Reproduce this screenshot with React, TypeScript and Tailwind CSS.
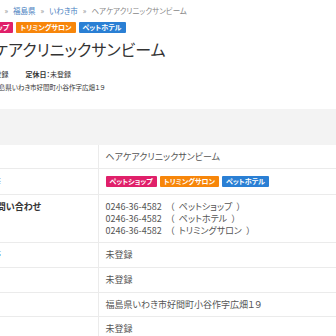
const jp = "font-['Noto_Sans_CJK_JP','Noto_Sans',sans-serif] [font-feature-settings:'palt']";

function Tag({ label, color }: { label: string; color: string }) {
  return (
    <span className={`inline-flex h-[11px] items-center px-[4px] text-[7px] font-bold leading-none text-white rounded-[1px] ${color}`}>
      {label}
    </span>
  );
}

function Tags() {
  return (
    <div className="flex gap-[3px]">
      <Tag label="ペットショップ" color="bg-[#e0206a]" />
      <Tag label="トリミングサロン" color="bg-[#f7860a]" />
      <Tag label="ペットホテル" color="bg-[#2a7fd4]" />
    </div>
  );
}

function Phone({ shop }: { shop: string }) {
  return (
    <div>
      0246-36-4582 <span className="ml-[2px] [font-feature-settings:normal]">（</span>
      <span className="ml-[4px]">{shop}</span>
      <span className="ml-[4px] [font-feature-settings:normal]">）</span>
    </div>
  );
}

type Row = { label: string; link?: boolean; bold?: boolean; body: React.ReactNode; pad: string };

const rows: Row[] = [
  { label: "店舗名", body: "ヘアケアクリニックサンビーム", pad: "py-[5.5px]" },
  { label: "取扱業種等", link: true, body: <div className="h-[12px]"><Tags /></div>, pad: "py-[6.5px]" },
  {
    label: "電話でのお問い合わせ",
    bold: true,
    pad: "py-[5.5px]",
    body: (
      <>
        <Phone shop="ペットショップ" />
        <Phone shop="ペットホテル" />
        <Phone shop="トリミングサロン" />
      </>
    ),
  },
  { label: "営業時間帯", link: true, body: "未登録", pad: "py-[6px]" },
  { label: "定休日", body: "未登録", pad: "py-[6px]" },
  { label: "住所", body: "福島県いわき市好間町小谷作字広畑１９", pad: "py-[5.5px]" },
  { label: "公式サイト", link: true, body: "未登録", pad: "py-[6px]" },
];

export default function App() {
  return (
    <div className={`w-[336px] h-[336px] overflow-hidden bg-white ${jp}`}>
      <div className="ml-[-48px] w-[420px]">
        <div className="flex items-center gap-[5px] pl-[26px] pt-[6px] text-[7.5px] leading-[10px] text-[#888]">
          <span className="text-[#4a7fc1]">ホーム</span>
          <span>»</span>
          <span className="text-[#4a7fc1]">福島県</span>
          <span>»</span>
          <span className="text-[#4a7fc1]">いわき市</span>
          <span>»</span>
          <span>ヘアケアクリニックサンビーム</span>
        </div>

        <div className="pl-[10px] pt-[6px]">
          <Tags />
        </div>

        <h1 className="pl-[10px] pt-[6px] text-[16px] font-normal leading-[20px] text-[#333]">
          ヘアケアクリニックサンビーム
        </h1>

        <div className="pl-[4px] pt-[9px] text-[7px] leading-[12px] text-[#333]">
          <span className="font-bold">電話番号：</span>
          <span>未登録</span>
          <span className="ml-[17px] font-bold">定休日：</span>
          <span>未登録</span>
        </div>
        <div className="pl-[24px] pt-[1px] text-[6.5px] leading-[12px] text-[#333]">
          <span className="font-bold">住所：</span>
          <span>福島県いわき市好間町小谷作字広畑１９</span>
        </div>

        <div className="mt-[16px] h-[36px] bg-[#f3f3f3] pl-[7px] flex items-center text-[9px] text-[#4a7fc1]">
          店舗情報
        </div>

        <table className="w-full border-collapse text-[9px] leading-[12px]">
          <tbody>
            {rows.map((r) => (
              <tr key={r.label} className="border-b border-[#ebebeb]">
                <td
                  className={`w-[146px] border-r border-[#ebebeb] align-top ${r.pad} ${
                    r.link ? "text-[#4a7fc1]" : "text-[#333]"
                  } ${r.bold ? "font-bold pl-[1px]" : "pl-[4px]"}`}
                >
                  {r.label}
                </td>
                <td className={`pl-[7px] text-[#555] ${r.pad}`}>{r.body}</td>
              </tr>
            ))}
          </tbody>
        </table>
      </div>
    </div>
  );
}
